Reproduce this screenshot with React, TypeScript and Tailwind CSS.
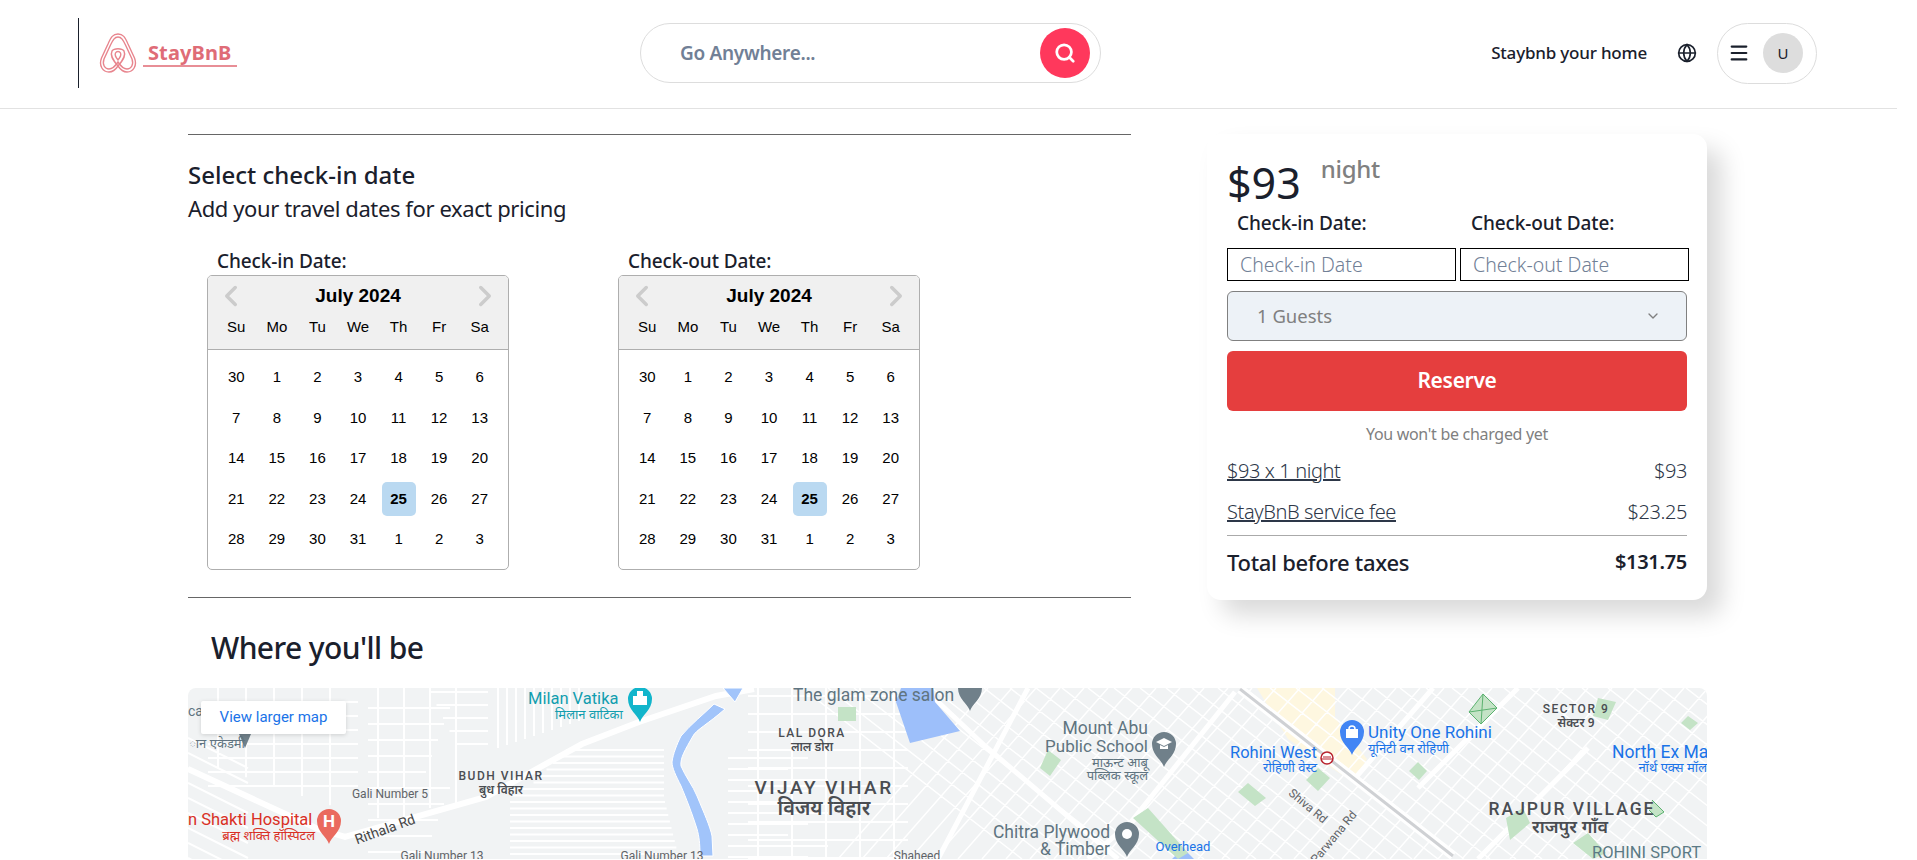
import { ChevronDown, ChevronLeft, ChevronRight, Globe, Menu, Search } from 'lucide-react';

const dayNames = ['Su', 'Mo', 'Tu', 'We', 'Th', 'Fr', 'Sa'];
const days = [30, 1, 2, 3, 4, 5, 6, 7, 8, 9, 10, 11, 12, 13, 14, 15, 16, 17, 18, 19, 20, 21, 22, 23, 24, 25, 26, 27, 28, 29, 30, 31, 1, 2, 3];

function Logo() {
  return (
    <div className="flex items-center h-[70px] border-l border-[#1a202c] pl-[20px]">
      <svg width="38" height="40" viewBox="0 0 38 40" fill="none" stroke="#e8858e" strokeWidth="1.4">
        <path d="M19 1 C14 1 12 4 9 11 L2.500 25 C-0.500 33 4 39 10 39 C14 39 17 36 19 33 C21 36 24 39 28 39 C34 39 38.500 33 35.500 25 L29 11 C26 4 24 1 19 1 Z" />
        <path d="M19 4 C15.500 4 14 7 11.500 12 L5 26 C3 32 6 36 10 36 C14 36 17 32 19 29 C21 32 24 36 28 36 C32 36 35 32 33 26 L26.500 12 C24 7 22.500 4 19 4 Z" />
        <path d="M19 33 C13 26 11 22 13 18 C15 15 23 15 25 18 C27 22 25 26 19 33 Z" />
        <path d="M19 27 C16.500 24 15.500 22 16.500 20 C17.500 18 20.500 18 21.500 20 C22.500 22 21.500 24 19 27 Z" />
      </svg>
      <div className="ml-[6px] flex flex-col w-[94px] mt-[1px]">
        <span className="pl-[5px] text-[20px] leading-[24px] font-bold text-[#df6c77] tracking-[0.1px]">StayBnB</span>
        <span className="h-[2px] bg-[#e88e96]" />
      </div>
    </div>
  );
}

function Header() {
  return (
    <header className="flex items-center h-[109px] pb-[2px] border-b border-[#e2e2e2] pl-[78px] pr-[80px]">
      <div className="w-[562px]">
        <Logo />
      </div>
      <div className="w-[461px] h-[60px] rounded-full border border-[#dddddd] flex items-center justify-between pl-[39px] pr-[10px]">
        <span className="text-[19px] font-semibold text-[#718096] tracking-[-0.3px]">Go Anywhere...</span>
        <div className="w-[50px] h-[50px] rounded-full bg-[#ff385c] flex items-center justify-center">
          <Search size={22} color="white" strokeWidth={3} />
        </div>
      </div>
      <div className="ml-auto flex items-center">
        <span className="text-[17px] font-medium text-[#1a202c] tracking-[-0.2px]">Staybnb your home</span>
        <Globe size={20} color="#1a202c" strokeWidth={2} className="ml-[30px]" />
        <div className="ml-[20px] w-[100px] h-[61px] rounded-full border border-[#dddddd] flex items-center pl-[10px]">
          <Menu size={22} color="#1a202c" strokeWidth={2.3} />
          <div className="ml-[13px] w-[40px] h-[40px] rounded-full bg-[#dddddd] flex items-center justify-center text-[15px] text-[#1a202c]">U</div>
        </div>
      </div>
    </header>
  );
}

function Calendar({ label }: { label: string }) {
  return (
    <div>
      <div className="ml-[10px] text-[19px] leading-[24px] font-medium text-[#1a202c] tracking-[-0.1px]">{label}</div>
      <div className="mt-[2px] w-[302px] h-[295px] rounded-[5px] border border-[#aeaeae] overflow-hidden font-['Liberation_Sans',sans-serif] text-black">
        <div className="h-[74px] bg-[#f0f0f0] border-b border-[#aeaeae] px-[8px]">
          <div className="flex items-center justify-between h-[40px] -mx-[2px]">
            <ChevronLeft size={34} color="#cccccc" strokeWidth={3.5} absoluteStrokeWidth />
            <span className="text-[19px] font-bold">July 2024</span>
            <ChevronRight size={34} color="#cccccc" strokeWidth={3.5} absoluteStrokeWidth />
          </div>
          <div className="grid grid-cols-7 text-center text-[15px] leading-[20px] mt-[1px]">
            {dayNames.map((d) => (
              <span key={d}>{d}</span>
            ))}
          </div>
        </div>
        <div className="grid grid-cols-7 auto-rows-[40.5px] px-[8px] pt-[7px] text-[15px]">
          {days.map((d, i) => (
            <div key={i} className="flex items-center justify-center">
              {i === 25 ? (
                <span className="w-[34px] h-[34px] rounded-[5px] bg-[#bad9f1] font-bold flex items-center justify-center">{d}</span>
              ) : (
                d
              )}
            </div>
          ))}
        </div>
      </div>
    </div>
  );
}

function ReserveCard() {
  return (
    <div className="w-[500px] ml-[76px] h-[466px] rounded-[14px] bg-white px-[20px] pt-[21px] shadow-[15px_15px_25px_rgba(0,0,0,0.15)]">
      <div className="flex items-start h-[56px]">
        <span className="text-[43px] leading-[56px] text-[#1a202c]">$93</span>
        <span className="ml-[20px] mt-[-2px] text-[24px] leading-[32px] font-medium text-[#808080] tracking-[-0.3px]">night</span>
      </div>
      <div className="flex h-[24px] text-[19px] leading-[24px] font-medium text-[#1a202c] tracking-[-0.1px]">
        <span className="ml-[10px] w-[234px]">Check-in Date:</span>
        <span>Check-out Date:</span>
      </div>
      <div className="mt-[13px] flex gap-[4px] w-[462px]">
        <div className="w-[229px] h-[33px] border border-black flex items-center pl-[12px] pt-[1px] text-[19.500px] text-[#718096] font-light">Check-in Date</div>
        <div className="w-[229px] h-[33px] border border-black flex items-center pl-[12px] pt-[1px] text-[19.500px] text-[#718096] font-light">Check-out Date</div>
      </div>
      <div className="mt-[10px] h-[50px] rounded-[6px] border border-[#808080] bg-[#edf2f7] flex items-center justify-between pl-[29px] pr-[25px] text-[18.500px] text-[#808080]">
        1 Guests
        <ChevronDown size={16} color="#808080" />
      </div>
      <div className="mt-[10px] h-[60px] rounded-[6px] bg-[#e53e3e] flex items-center justify-center text-[21px] font-semibold text-white tracking-[-0.3px]">Reserve</div>
      <div className="mt-[13px] text-center text-[16px] leading-[20px] text-[#808080] tracking-[-0.3px]">You won't be charged yet</div>
      <div className="mt-[13px] flex justify-between text-[20px] leading-[28px] font-light text-[#2d3748] tracking-[-0.4px]">
        <span className="underline">$93 x 1 night</span>
        <span>$93</span>
      </div>
      <div className="mt-[13px] flex justify-between text-[20px] leading-[28px] font-light text-[#2d3748] tracking-[-0.4px]">
        <span className="underline">StayBnB service fee</span>
        <span>$23.25</span>
      </div>
      <div className="mt-[9px] h-px bg-[#aaaaaa]" />
      <div className="mt-[11px] flex justify-between text-[22px] leading-[30px] font-medium text-[#1a202c] tracking-[-0.3px]">
        <span>Total before taxes</span>
        <span className="font-semibold text-[20px]">$131.75</span>
      </div>
    </div>
  );
}

// map drawing: everything is in px relative to the map's top left corner
const thinRoads = (() => {
  const out: string[] = [];
  // the streets of Vijay Vihar, horizontal rows
  for (let y = 62; y < 171; y += 6.500) out.push(`M${y < 100 ? 340 + (100 - y) : 322} ${y}H${476 + (y > 110 ? (y - 110) / 4 : 0)}`);
  for (let y = 4; y < 60; y += 13) out.push(`M${240 + y / 2} ${y}H300`);
  for (let x = 310; x < 400; x += 9) out.push(`M${x} 0V${60 - (x - 310) / 3}`);
  for (let y = 70; y < 171; y += 11) out.push(`M540 ${y}H${600 + (y % 3) * 20}`);
  for (let y = 8; y < 171; y += 18) out.push(`M560 ${y}H720`);
  for (let x = 570; x < 720; x += 34) out.push(`M${x} 0V170`);
  for (let y = 20; y < 171; y += 16) out.push(`M180 ${y}H${262 - (y % 5) * 6}`);
  for (let x = 190; x < 290; x += 26) out.push(`M${x} 0V${x < 240 ? 130 : 120}`);
  for (let y = 10; y < 171; y += 15) out.push(`M0 ${y + 40}L60 ${y + 70}`);
  for (let x = 30; x < 160; x += 28) out.push(`M${x} 0V${70 + x / 3}`);
  for (let y = 14; y < 100; y += 14) out.push(`M20 ${y}H170`);
  return out;
})();

// diagonal blocks on the right side
const diagonalRoads = (() => {
  const out: string[] = [];
  for (let d = -1; d < 36; d++) {
    const x = 640 + d * 26;
    out.push(`M${x} 0L${x + 220} 171`);
  }
  for (let d = 0; d < 34; d++) {
    const x = 800 + d * 24;
    out.push(`M${x} 0L${x - 150} 171`);
  }
  return out;
})();

function Pin({ x, y, color, children }: { x: number; y: number; color: string; children?: React.ReactNode }) {
  return (
    <g transform={`translate(${x} ${y})`}>
      <path d="M0 23 C-2 16 -12 11 -12 0 A12 12 0 1 1 12 0 C12 11 2 16 0 23 Z" fill={color} />
      {children}
    </g>
  );
}

function MapView() {
  const t = { fontFamily: "Roboto, 'Noto Sans', sans-serif" };
  const devanagari = { fontFamily: "'Noto Sans Devanagari', 'Noto Sans', 'Noto Sans CJK SC', sans-serif" };
  return (
    <div className="relative w-[1519px] h-[171px] rounded-t-lg overflow-hidden bg-[#f1f3f4]">
      <svg width="1519" height="171" viewBox="0 0 1519 171" fill="none">
        <path d="M1069 0 L1147 0 L1147 30 L1179 71 L1165 94 L1100 51 Z" fill="#fef7e0" />
        <path d={thinRoads.join(' ')} stroke="#ffffff" strokeWidth="2" />
        <path d={diagonalRoads.join(' ')} stroke="#ffffff" strokeWidth="1.5" />
        <path d="M0 81 L130 141 L157 149 L298 109 L394 56 L451 34 L528 8 L566 1" stroke="#ffffff" strokeWidth="6" />
        <path d="M840 0 L750 171 M747 11 L797 58 L930 171 M1047 4 L943 134 L900 171 M1245 0 L1169 88 M1400 60 L1290 171 M1330 0 L1230 100" stroke="#ffffff" strokeWidth="5" />
        <path d="M1052 1 L1265 168" stroke="#ffffff" strokeWidth="9" />
        <path d="M1052 1 L1265 168" stroke="#cfd1d4" strokeWidth="3" />
        <path d="M535 0 L555 0 L547 14 Z M526 16 L537 21 C520 36 508 42 505 48 C497 62 492 70 493 78 C497 88 505 98 509 108 C516 125 522 138 524 148 L525 168 L512 168 C512 155 511 148 509 141 C504 125 498 110 493 98 C488 88 484 80 484 74 C485 66 489 56 493 48 C503 36 516 26 526 16 Z" fill="#a1c4fa" stroke="#ffffff" strokeWidth="1" />
        <path d="M713 0 L745 0 L747 14 L772 43 L722 55 L708 14 Z M984 171 L995 160 L1006 171 Z" fill="#9dbffa" />
        <path d="M650 19 H668 V33 H650 Z M860 62 L873 72 L862 88 L852 80 Z M1060 95 L1078 110 L1067 118 L1050 104 Z M1130 80 L1142 90 L1130 103 L1118 92 Z M1230 74 L1239 83 L1231 92 L1221 83 Z M1410 10 L1428 14 L1420 32 L1405 28 Z M1500 28 L1510 35 L1502 42 L1493 35 Z M960 120 L1000 165 L990 171 L945 130 Z M1318 130 L1335 120 L1342 135 L1322 152 Z M1385 155 L1400 145 L1418 165 L1405 171 Z" fill="#c4e3c6" />
        <path d="M1295 6 L1309 20 L1293 36 L1281 24 Z M1295 6 L1293 36 M1281 24 L1309 20 M1464 112 L1476 124 L1468 129 L1461 122" stroke="#5cb270" strokeWidth="1" fill="#c4e3c6" />

        <Pin x={452} y={11} color="#12b5cb"><path d="M-7 6 H7 V-3 L3 -3 V-8 H-3 V-3 H-7 Z" fill="white" /></Pin>
        <Pin x={782} y={0} color="#70808a" />
        <Pin x={141} y={133} color="#ea6a5e"><text x="0" y="6" textAnchor="middle" fontSize="17" fontWeight="700" fill="white" style={t}>H</text></Pin>
        <Pin x={976} y={56} color="#70808a"><path d="M-8 -2 L0 -6 L8 -2 L0 2 Z M-4 1 V5 H4 V1 L0 3 Z" fill="white" /></Pin>
        <Pin x={939} y={146} color="#70808a"><circle r="5" fill="white" /></Pin>
        <Pin x={1164} y={44} color="#4285f4"><path d="M-6 -3 H6 V6 H-6 Z" fill="white" /><path d="M-3 -3 A3 3 0 0 1 3 -3" stroke="white" strokeWidth="1.500" /></Pin>
        <path d="M51 46 L57 60 L63 46 Z" fill="#70808a" />
        <circle cx="1139" cy="70" r="6" fill="#ffffff" stroke="#b8232f" strokeWidth="1.500" />
        <path d="M1133 71 H1145 M1135 69 H1143" stroke="#b8232f" strokeWidth="1" />

        <g style={t} fontSize="17.500">
          <text x="605" y="13" fill="#5f7480">The glam zone salon</text>
          <text x="960" y="46" textAnchor="end" fill="#5f7480">Mount Abu</text>
          <text x="960" y="64" textAnchor="end" fill="#5f7480" fontSize="17">Public School</text>
          <text x="922" y="150" textAnchor="end" fill="#5f7480">Chitra Plywood</text>
          <text x="922" y="167" textAnchor="end" fill="#5f7480">&amp; Timber</text>
          <text x="1042" y="70" fill="#1a73e8" fontSize="16.500">Rohini West</text>
          <text x="1180" y="50" fill="#1a73e8" fontSize="17">Unity One Rohini</text>
          <text x="1424" y="70" fill="#1a73e8">North Ex Mall</text>
          <text x="1404" y="170" fill="#5b7a85" fontSize="16.500">ROHINI SPORT</text>
          <text x="0" y="137" fill="#d93025" fontSize="16.500">n Shakti Hospital</text>
          <text x="0" y="28" fill="#5f7480" fontSize="14">ca</text>
          <text x="995" y="163" textAnchor="middle" fill="#1a73e8" fontSize="13">Overhead</text>
          <text x="340" y="16" fontSize="16.500" fill="#129eaf">Milan Vatika</text>
        </g>
        <g style={t} fill="#5f6368" fontSize="12">
          <text x="202" y="110" textAnchor="middle">Gali Number 5</text>
          <text x="254" y="172" textAnchor="middle">Gali Number 13</text>
          <text x="474" y="172" textAnchor="middle">Gali Number 13</text>
          <text x="729" y="172" textAnchor="middle">Shaheed</text>
          <text x="197" y="146" textAnchor="middle" fontSize="14" fill="#444" transform="rotate(-20 197 141)">Rithala Rd</text>
          <text x="1120" y="122" textAnchor="middle" transform="rotate(40 1120 118)">Shiva Rd</text>
          <text x="1140" y="160" textAnchor="middle" transform="rotate(-50 1140 156)">HL Parwana Rd</text>
        </g>
        <g style={t} fill="#4a4d52" fontWeight="500" textAnchor="middle">
          <text x="313" y="92" fontSize="12" letterSpacing="1.500">BUDH VIHAR</text>
          <text x="624" y="49" fontSize="12" letterSpacing="1.500">LAL DORA</text>
          <text x="1388" y="25" fontSize="12" letterSpacing="1.500">SECTOR 9</text>
          <text x="636" y="106" fontSize="19" letterSpacing="2.500">VIJAY VIHAR</text>
          <text x="1384" y="127" fontSize="17.500" letterSpacing="2">RAJPUR VILLAGE</text>
        </g>
        <g style={devanagari} fontSize="13">
          <text x="367" y="31" fill="#129eaf">मिलान वाटिका</text>
          <text x="127" y="152" textAnchor="end" fill="#d93025">ब्रह्म शक्ति हॉस्पिटल</text>
          <text x="960" y="79" textAnchor="end" fill="#5f7480">माऊन्ट आबू</text>
          <text x="960" y="92" textAnchor="end" fill="#5f7480">पब्लिक स्कूल</text>
          <text x="1129" y="84" textAnchor="end" fill="#1a73e8">रोहिणी वेस्ट</text>
          <text x="1180" y="65" fill="#1a73e8">यूनिटी वन रोहिणी</text>
          <text x="1519" y="84" textAnchor="end" fill="#1a73e8">नॉर्थ एक्स मॉल</text>
          <text x="57" y="60" textAnchor="end" fill="#5f7480">ान एकेडमी</text>
          <g fill="#4a4d52" fontWeight="600" textAnchor="middle">
            <text x="313" y="106" fontSize="12">बुध विहार</text>
            <text x="624" y="63" fontSize="12">लाल डोरा</text>
            <text x="1388" y="39" fontSize="12">सेक्टर 9</text>
            <text x="636" y="127" fontSize="20">विजय विहार</text>
            <text x="1382" y="145" fontSize="18">राजपुर गाँव</text>
          </g>
        </g>
      </svg>
      <div className="absolute left-[13px] top-[13px] w-[145px] h-[33px] bg-white rounded-[2px] shadow-[0_1px_4px_rgba(0,0,0,0.15)] flex items-center justify-center font-['Roboto',sans-serif] text-[15px] text-[#1a73e8]">
        View larger map
      </div>
    </div>
  );
}

export default function App() {
  return (
    <div className="w-[1897px] h-[860px] overflow-hidden bg-white font-['Noto_Sans',sans-serif]">
      <Header />
      <main className="pl-[188px] pt-[25px]">
        <div className="flex items-start">
          <div className="w-[943px]">
            <div className="h-px bg-[#666666]" />
            <h2 className="mt-[24px] text-[24px] leading-[32px] font-medium text-[#1a202c]">Select check-in date</h2>
            <p className="mt-[2px] text-[22px] leading-[30px] text-[#1a202c] tracking-[-0.4px]">Add your travel dates for exact pricing</p>
            <div className="mt-[26px] ml-[19px] flex gap-[109px]">
              <Calendar label="Check-in Date:" />
              <Calendar label="Check-out Date:" />
            </div>
            <div className="mt-[27px] h-px bg-[#666666]" />
          </div>
          <ReserveCard />
        </div>
        <h2 className="mt-[28px] ml-[23px] text-[30px] leading-[40px] font-medium text-[#1a202c] tracking-[-0.6px]">Where you'll be</h2>
        <div className="mt-[20px]">
          <MapView />
        </div>
      </main>
    </div>
  );
}
